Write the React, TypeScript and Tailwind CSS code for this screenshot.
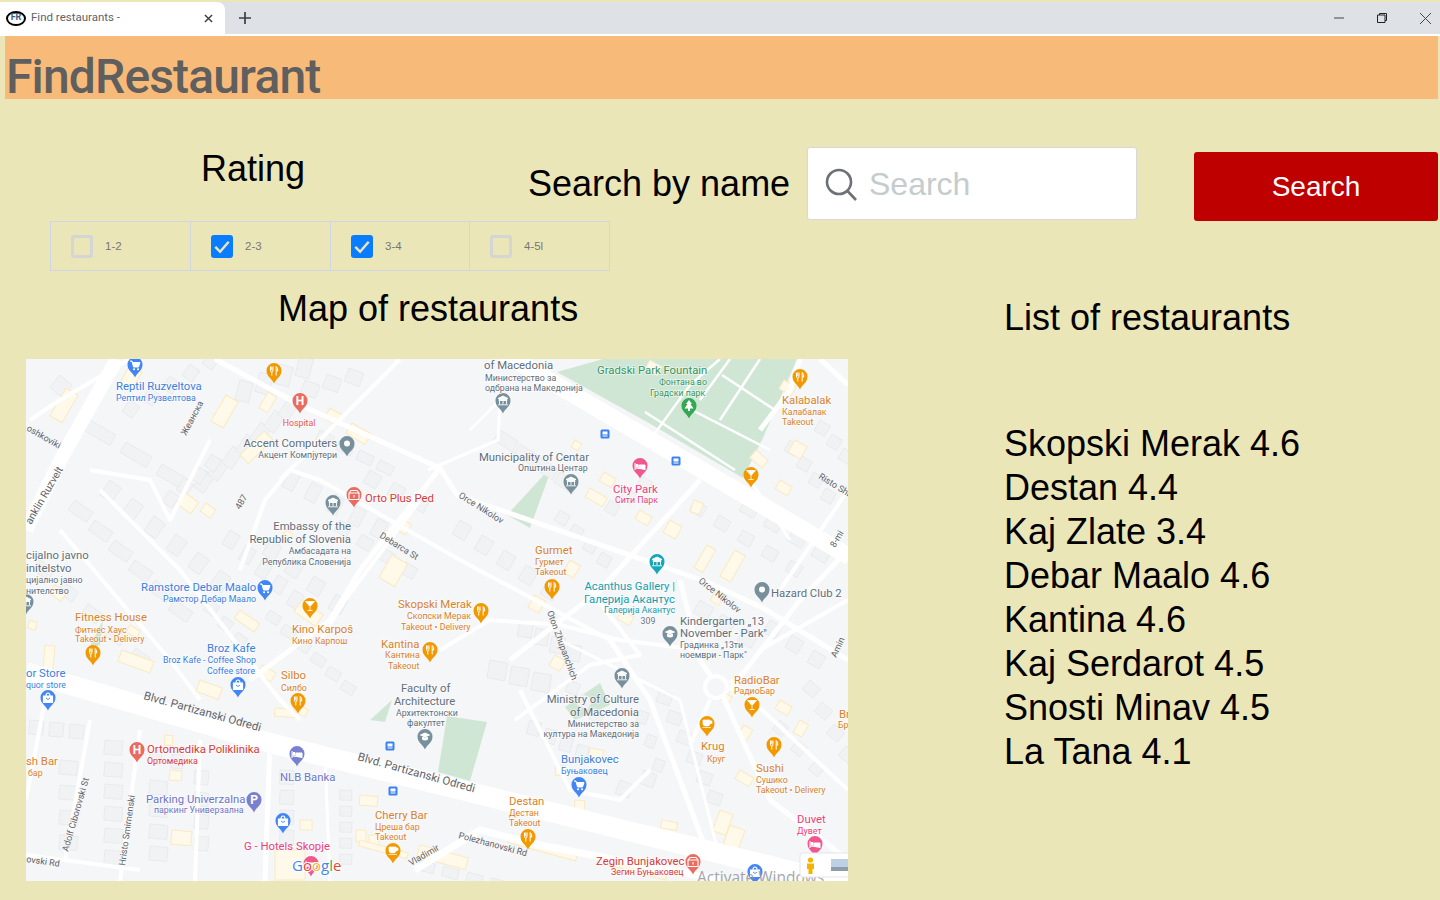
const roads: [string, number][] = [
  ["M26 672 L270 743 L848 885", 20],
  ["M490 345 L557 385 L850 557", 17],
  ["M26 530 L63 455 L117 359", 14],
  ["M215 359 L300 405 L440 468 L457 495 L707 582 L763 608 L848 660", 5],
  ["M440 468 L360 570 L330 620 L250 680", 5],
  ["M130 359 L60 400 L30 420", 4],
  ["M210 440 L170 520 L150 480 L90 470", 4],
  ["M100 490 L180 570 L280 700 L300 720", 4],
  ["M60 530 L170 660 L200 700", 4],
  ["M240 570 L265 500 L290 470 L320 480 L460 560 L610 640", 4],
  ["M280 480 L400 359", 4],
  ["M320 640 L345 600 L420 500", 4],
  ["M428 470 L498 440 L500 400 L470 430", 3],
  ["M510 660 L600 590 L700 480", 5],
  ["M440 650 L490 620 L560 625 L620 640 L700 650", 4],
  ["M610 640 L650 700 L710 860", 5],
  ["M590 590 L640 655 L590 665 L515 720", 4],
  ["M520 690 L570 790 L620 800 L650 770", 4],
  ["M680 580 L700 660 L720 690 L770 800 L848 860", 5],
  ["M730 690 L800 600 L848 550", 5],
  ["M730 680 L848 790", 4],
  ["M710 700 L690 745", 4],
  ["M760 650 L848 600", 4],
  ["M790 540 L750 480", 3],
  ["M780 590 L848 490", 4],
  ["M760 430 L790 390 L800 359", 5],
  ["M820 359 L848 385", 5],
  ["M45 700 L26 800", 4],
  ["M90 720 L65 860", 4],
  ["M140 730 L120 881", 4],
  ["M200 740 L195 881", 4],
  ["M270 740 L265 881", 5],
  ["M325 755 L330 881", 3],
  ["M26 855 L140 870", 4],
  ["M415 870 L480 830 L540 845 L720 880", 7],
  ["M720 860 L680 700 L560 640", 3],
];

const greens = [
  "557,372 603,359 797,359 763,438 743,478 647,422",
  "507,515 553,465 530,528",
  "447,716 487,722 470,781 438,772",
  "565,707 600,683 610,705 575,720",
  "370,720 392,700 385,722",
  "88,650 103,620 100,645",
];

const parkPaths = [
  "M650 440 L690 385 L720 359",
  "M692 410 L770 450",
  "M730 359 L700 400",
  "M722 375 L775 410",
  "M760 359 L720 420",
  "M645 412 L735 470",
];

// x, y, dx, dy, n, w, h, angle
const grayRows: number[][] = [
  [60, 375, 38, -2, 1, 16, 16, 40],
  [90, 420, 36, 22, 3, 30, 12, 30],
  [110, 480, 22, 18, 6, 14, 18, 35],
  [75, 500, 20, 20, 6, 22, 12, 35],
  [40, 560, 24, 22, 5, 18, 12, 35],
  [130, 400, 20, -12, 5, 12, 14, 35],
  [205, 470, 14, -12, 7, 12, 20, 35],
  [170, 490, 14, -12, 4, 12, 14, 35],
  [240, 380, 20, -8, 4, 14, 20, 15],
  [305, 380, 22, -6, 3, 16, 14, 20],
  [320, 430, 20, 10, 4, 16, 10, 25],
  [290, 470, 22, 12, 5, 12, 18, 28],
  [230, 530, 16, 15, 5, 12, 16, 30],
  [270, 540, 22, 18, 4, 14, 16, 30],
  [340, 520, 22, 14, 4, 14, 12, 30],
  [370, 470, 24, 12, 3, 14, 14, 30],
  [460, 520, 22, 15, 5, 14, 16, 30],
  [500, 430, 20, 14, 4, 22, 12, 32],
  [560, 510, 14, 14, 4, 12, 12, 30],
  [610, 500, 16, -12, 3, 12, 12, 30],
  [695, 500, 24, 15, 5, 14, 12, 30],
  [745, 500, 24, 15, 4, 16, 12, 30],
  [790, 440, 12, 16, 4, 12, 12, 30],
  [820, 420, 12, 14, 6, 12, 12, 30],
  [700, 600, 22, 14, 3, 16, 14, 30],
  [770, 620, 22, 15, 3, 14, 14, 30],
  [810, 680, 12, 22, 4, 14, 12, 40],
  [780, 720, 18, 20, 3, 12, 12, 40],
  [660, 690, 10, 20, 6, 14, 12, 20],
  [640, 710, 8, 24, 3, 10, 12, 20],
  [520, 620, 16, 8, 4, 14, 16, 10],
  [490, 660, 22, 6, 3, 18, 18, 10],
  [530, 720, 16, 8, 4, 12, 14, 15],
  [570, 680, 12, 14, 3, 12, 12, 25],
  [620, 780, 24, -10, 2, 14, 14, 20],
  [270, 610, 15, 14, 6, 14, 10, 32],
  [210, 600, 14, 16, 3, 12, 12, 35],
  [30, 720, 20, 2, 3, 14, 14, 5],
  [105, 740, 0, 22, 6, 18, 14, 5],
  [60, 760, 0, 25, 4, 18, 14, 5],
  [150, 750, 22, 4, 2, 12, 14, 5],
  [150, 780, 0, 22, 4, 18, 14, 5],
  [195, 770, 0, 22, 4, 14, 14, 5],
  [280, 770, 0, 20, 5, 14, 14, 2],
  [340, 790, 0, 16, 5, 12, 10, 2],
  [420, 860, 24, 6, 4, 16, 10, 15],
];

const yellows: number[][] = [
  [66, 388, 14, 32, 30], [226, 395, 14, 30, 30], [268, 392, 10, 18, 30], [330, 408, 14, 12, 30], [352, 423, 22, 12, 30],
  [184, 492, 18, 14, 35], [206, 503, 12, 10, 35], [240, 455, 34, 12, -45], [286, 530, 8, 10, 30], [397, 530, 12, 10, -60],
  [392, 555, 18, 26, 30], [302, 600, 26, 14, 35], [240, 610, 24, 10, 35], [122, 650, 34, 12, 20], [130, 625, 12, 8, 30],
  [55, 585, 14, 10, 35], [200, 680, 24, 12, 20], [262, 665, 16, 10, 30], [275, 708, 20, 8, 5], [300, 705, 10, 8, 30],
  [165, 735, 8, 10, 5], [170, 770, 12, 10, 5], [172, 830, 20, 14, 5], [300, 820, 12, 10, 0], [275, 850, 30, 30, 0],
  [360, 795, 18, 10, 5], [369, 835, 10, 10, 0], [356, 830, 10, 12, 0], [590, 488, 20, 10, 30], [640, 510, 14, 10, 30],
  [670, 520, 14, 14, 30], [694, 500, 10, 12, 20], [707, 545, 10, 26, 30], [735, 550, 12, 30, 30], [716, 590, 10, 12, 30],
  [756, 450, 16, 10, 40], [780, 480, 14, 10, 30], [720, 478, 12, 8, 40], [784, 380, 14, 10, 30], [795, 440, 14, 14, 30],
  [720, 690, 14, 8, 30], [780, 700, 14, 10, 30], [744, 725, 10, 12, 30], [740, 770, 16, 10, 30], [800, 720, 10, 14, 30],
  [590, 748, 14, 10, 10], [556, 765, 10, 10, 5], [575, 800, 10, 10, 5], [662, 820, 16, 8, 10], [720, 810, 14, 22, 20],
  [730, 825, 16, 20, 20], [420, 845, 50, 12, 15], [610, 855, 60, 10, 15], [360, 840, 50, 6, 15], [510, 835, 70, 8, 15],
  [575, 440, 8, 8, 30], [604, 472, 14, 10, 30], [650, 360, 14, 10, 30], [570, 560, 12, 14, 30], [622, 610, 14, 10, 30],
  [535, 595, 12, 14, 30], [555, 655, 12, 12, 30], [130, 365, 14, 20, 30], [45, 645, 10, 30, 5], [30, 620, 8, 8, 20],
];

const labels: [string, number, number, string, number, "start" | "end" | "middle"][] = [
  ["Reptil Ruzveltova", 116, 390, "#3c7fe0", 11.3, "start"], ["Рептил Рузвелтова", 116, 401, "#3c7fe0", 8.8, "start"],
  ["Hospital", 299, 426, "#e8554e", 8.8, "middle"],
  ["Accent Computers", 337, 447, "#5f6f7b", 11.3, "end"], ["Акцент Компјутери", 337, 458, "#5f6f7b", 8.8, "end"],
  ["Orto Plus Ped", 365, 502, "#d93a35", 11.3, "start"],
  ["Embassy of the", 351, 530, "#5f6f7b", 11.3, "end"], ["Republic of Slovenia", 351, 543, "#5f6f7b", 11.3, "end"],
  ["Амбасадата на", 351, 554, "#5f6f7b", 8.8, "end"], ["Република Словенија", 351, 565, "#5f6f7b", 8.8, "end"],
  ["Ramstore Debar Maalo", 141, 591, "#3c7fe0", 11.3, "start"], ["Рамстор Дебар Маало", 163, 602, "#3c7fe0", 8.8, "start"],
  ["cijalno javno", 26, 559, "#5f6f7b", 11.3, "start"], ["initelstvo", 26, 572, "#5f6f7b", 11.3, "start"],
  ["цијално јавно", 26, 583, "#5f6f7b", 8.8, "start"], ["нителство", 26, 594, "#5f6f7b", 8.8, "start"],
  ["Fitness House", 75, 621, "#d9822b", 11.3, "start"], ["Фитнес Хаус", 75, 633, "#d9822b", 8.8, "start"], ["Takeout • Delivery", 75, 642, "#d9822b", 8.8, "start"],
  ["Kino Karpoš", 292, 633, "#d9822b", 11.3, "start"], ["Кино Карпош", 292, 644, "#d9822b", 8.8, "start"],
  ["Broz Kafe", 207, 652, "#3c7fe0", 11.3, "start"], ["Broz Kafe - Coffee Shop", 163, 663, "#3c7fe0", 8.8, "start"], ["Coffee store", 207, 674, "#3c7fe0", 8.8, "start"],
  ["Skopski Merak", 398, 608, "#d9822b", 11.3, "start"], ["Скопски Мерак", 407, 619, "#d9822b", 8.8, "start"], ["Takeout • Delivery", 401, 630, "#d9822b", 8.8, "start"],
  ["Kantina", 381, 648, "#d9822b", 11.3, "start"], ["Кантина", 385, 658, "#d9822b", 8.8, "start"], ["Takeout", 388, 669, "#d9822b", 8.8, "start"],
  ["Silbo", 281, 679, "#d9822b", 11.3, "start"], ["Силбо", 281, 691, "#d9822b", 8.8, "start"],
  ["Faculty of", 401, 692, "#5f6f7b", 11.3, "start"], ["Architecture", 394, 705, "#5f6f7b", 11.3, "start"], ["Архитектонски", 396, 716, "#5f6f7b", 8.8, "start"], ["факултет", 407, 726, "#5f6f7b", 8.8, "start"],
  ["or Store", 26, 677, "#3c7fe0", 11.3, "start"], ["quor store", 26, 688, "#3c7fe0", 8.8, "start"],
  ["sh Bar", 26, 765, "#d9822b", 11.3, "start"], ["бар", 28, 776, "#d9822b", 8.8, "start"],
  ["Ortomedika Poliklinika", 147, 753, "#d93a35", 11.3, "start"], ["Ортомедика", 147, 764, "#d93a35", 8.8, "start"],
  ["NLB Banka", 280, 781, "#6e76c9", 11.3, "start"],
  ["Parking Univerzalna", 146, 803, "#6e76c9", 11.3, "start"], ["паркинг Универзална", 154, 813, "#6e76c9", 8.8, "start"],
  ["G - Hotels Skopje", 244, 850, "#ec407a", 11.3, "start"],
  ["Cherry Bar", 375, 819, "#d9822b", 11.3, "start"], ["Цреша бар", 375, 830, "#d9822b", 8.8, "start"], ["Takeout", 375, 840, "#d9822b", 8.8, "start"],
  ["Destan", 509, 805, "#d9822b", 11.3, "start"], ["Дестан", 509, 816, "#d9822b", 8.8, "start"], ["Takeout", 509, 826, "#d9822b", 8.8, "start"],
  ["Bunjakovec", 561, 763, "#3c7fe0", 11.3, "start"], ["Буњаковец", 561, 774, "#3c7fe0", 8.8, "start"],
  ["Ministry of Culture", 639, 703, "#5f6f7b", 11.3, "end"], ["of Macedonia", 639, 716, "#5f6f7b", 11.3, "end"],
  ["Министерство за", 639, 727, "#5f6f7b", 8.8, "end"], ["култура на Македонија", 639, 737, "#5f6f7b", 8.8, "end"],
  ["Krug", 701, 750, "#d9822b", 11.3, "start"], ["Круг", 707, 762, "#d9822b", 8.8, "start"],
  ["Sushi", 756, 772, "#d9822b", 11.3, "start"], ["Сушико", 756, 783, "#d9822b", 8.8, "start"], ["Takeout • Delivery", 756, 793, "#d9822b", 8.8, "start"],
  ["RadioBar", 734, 684, "#d9822b", 11.3, "start"], ["РадиоБар", 734, 694, "#d9822b", 8.8, "start"],
  ["Kindergarten „13", 680, 625, "#5f6f7b", 11.3, "start"], ["November - Park\"", 680, 637, "#5f6f7b", 11.3, "start"],
  ["Градинка „13ти", 680, 648, "#5f6f7b", 8.8, "start"], ["ноември - Парк\"", 680, 658, "#5f6f7b", 8.8, "start"],
  ["Zegin Bunjakovec", 596, 865, "#d93a35", 11.3, "start"], ["Зегин Буњаковец", 611, 875, "#d93a35", 8.8, "start"],
  ["Duvet", 797, 823, "#ec407a", 11.3, "start"], ["Дувет", 797, 834, "#ec407a", 8.8, "start"],
  ["Hazard Club 2", 771, 597, "#5f6f7b", 11.3, "start"],
  ["Acanthus Gallery |", 675, 590, "#129eaf", 11.3, "end"], ["Галерија Акантус", 675, 603, "#129eaf", 11.3, "end"], ["Галерија Акантус", 675, 613, "#129eaf", 8.8, "end"],
  ["309", 648, 624, "#70757a", 8.8, "middle"],
  ["Gurmet", 535, 554, "#d9822b", 11.3, "start"], ["Гурмет", 535, 565, "#d9822b", 8.8, "start"], ["Takeout", 535, 575, "#d9822b", 8.8, "start"],
  ["City Park", 613, 493, "#ec407a", 11.3, "start"], ["Сити Парк", 615, 503, "#ec407a", 8.8, "start"],
  ["Municipality of Centar", 479, 461, "#5f6f7b", 11.3, "start"], ["Општина Центар", 518, 471, "#5f6f7b", 8.8, "start"],
  ["of Macedonia", 484, 369, "#5f6f7b", 11.3, "start"], ["Министерство за", 485, 381, "#5f6f7b", 8.8, "start"], ["одбрана на Македонија", 485, 391, "#5f6f7b", 8.8, "start"],
  ["Gradski Park Fountain", 597, 374, "#34955a", 11.3, "start"], ["Фонтана во", 659, 385, "#34955a", 8.8, "start"], ["Градски парк", 650, 396, "#34955a", 8.8, "start"],
  ["Kalabalak", 782, 404, "#d9822b", 11.3, "start"], ["Калабалак", 782, 415, "#d9822b", 8.8, "start"], ["Takeout", 782, 425, "#d9822b", 8.8, "start"],
  ["Br", 839, 718, "#d9822b", 11.3, "start"], ["Бр", 838, 728, "#d9822b", 8.8, "start"],
];

const streets: [string, number, number, number, number][] = [
  ["Blvd. Partizanski Odredi", 143, 699, 15.5, 11.5],
  ["Blvd. Partizanski Odredi", 357, 760, 15.5, 11.5],
  ["Orce Nikolov", 458, 497, 32, 9],
  ["Orce Nikolov", 698, 582, 38, 9],
  ["Debarca St", 379, 537, 32, 9],
  ["Жеанска", 186, 436, -62, 9],
  ["487", 240, 510, -60, 9],
  ["oshkoviki", 26, 430, 30, 9],
  ["anklin Ruzvelt", 31, 525, -60, 10.5],
  ["Risto Shi", 818, 478, 32, 9],
  ["Oton Zhupanchich", 547, 612, 70, 9],
  ["Adolf Ciborovski St", 68, 852, -74, 9],
  ["Hristo Smirnenski", 125, 866, -82, 9],
  ["ovski Rd", 26, 862, 8, 9],
  ["Vladimir", 411, 866, -30, 9],
  ["Polezhanovski Rd", 458, 838, 15, 9],
  ["8-mi", 835, 548, -60, 9],
  ["Amin", 836, 658, -65, 9],
];

const ORANGE = "#f29900";
const pins: [number, number, string, string][] = [
  [274, 372, ORANGE, "food"], [93, 654, ORANGE, "food"], [481, 612, ORANGE, "food"], [430, 651, ORANGE, "food"],
  [298, 702, ORANGE, "food"], [552, 588, ORANGE, "food"], [800, 378, ORANGE, "food"], [774, 746, ORANGE, "food"], [528, 838, ORANGE, "food"],
  [310, 607, ORANGE, "bar"], [751, 476, ORANGE, "bar"], [752, 706, ORANGE, "bar"],
  [707, 725, ORANGE, "cup"], [393, 852, ORANGE, "cup"],
  [135, 366, "#4285f4", "cart"], [265, 589, "#4285f4", "cart"], [579, 786, "#4285f4", "cart"],
  [238, 686, "#4285f4", "bag"], [48, 699, "#4285f4", "bag"], [283, 822, "#4285f4", "bag"], [755, 873, "#4285f4", "bag"],
  [300, 402, "#ea6b5f", "H"], [137, 751, "#ea6b5f", "H"],
  [354, 496, "#ea6b5f", "store"], [693, 863, "#ea6b5f", "store"],
  [347, 445, "#78909c", "dot"], [762, 591, "#78909c", "dot"],
  [503, 402, "#78909c", "gov"], [571, 483, "#78909c", "gov"], [333, 504, "#78909c", "gov"], [622, 677, "#78909c", "gov"], [26, 603, "#78909c", "gov"],
  [425, 738, "#78909c", "cap"], [670, 635, "#78909c", "cap"],
  [689, 407, "#34a853", "tree"], [640, 467, "#f0578d", "bed"], [815, 845, "#f0578d", "bed"], [311, 865, "#f0578d", "bed"],
  [657, 563, "#12a8b8", "gov"], [297, 755, "#7a80d0", "bed"], [254, 801, "#7a80d0", "P"],
];

function Pin({ x, y, color, kind }: { x: number; y: number; color: string; kind: string }) {
  return (
    <g transform={`translate(${x} ${y})`}>
      <path d="M0 11.5C-1.5 7-7.5 5-7.5-1.5A7.5 7.5 0 1 1 7.5-1.5C7.5 5 1.5 7 0 11.5Z" fill={color} />
      {kind === "food" && <path d="M-3.5-5.5V-2Q-3.5 0-2.2 0V3.5M-2.2-5.5V-2M-1-5.5V-2Q-1 0-2.2 0M2.2 3.5V-5.5Q3.8-4.5 3.8-1H2.2" fill="none" stroke="#fff" strokeWidth="1" />}
      {kind === "bar" && <path d="M-4.5-5.5H4.5L0-.5ZM0-.5V3.5M-2.5 3.5H2.5" fill="#fff" stroke="#fff" strokeWidth=".8" />}
      {kind === "cup" && <path d="M-4-5H3V-1Q3 1-.5 1T-4-1ZM3-4H5V-1.5H3M-4.5 2.5H4" fill="#fff" stroke="#fff" strokeWidth=".7" />}
      {kind === "cart" && <path d="M-5-5H-3L-1.5 1H3.5L5-3.5H-2.5" fill="#fff" stroke="#fff" strokeWidth="1" />}
      {kind === "cart" && <path d="M-1 3.2h.1M3 3.2h.1" stroke="#fff" strokeWidth="2" strokeLinecap="round" />}
      {kind === "bag" && <path d="M-4.5-3H4.5V3.5H-4.5ZM-2-3Q-2-6 0-6T2-3" fill="none" stroke="#fff" strokeWidth="1.2" />}
      {kind === "bag" && <rect x="-4" y="-3" width="8" height="6.5" fill="#fff" />}
      {kind === "bag" && <path d="M-2-1Q0 2 2-1" fill="none" stroke={color} strokeWidth=".9" />}
      {(kind === "H" || kind === "P") && <text y="2.5" textAnchor="middle" fontSize="12" fontWeight="700" fill="#fff">{kind}</text>}
      {kind === "store" && <path d="M-5-3H5V3.5H-5ZM-5-3L-3-5.5H3L5-3M0-1V1.5" fill="none" stroke="#fff" strokeWidth="1.1" />}
      {kind === "dot" && <circle cy="-1.5" r="3" fill="#fff" />}
      {kind === "gov" && <path d="M-5-3.5L0-6L5-3.5ZM-4-2.5H4V-1.5H-4ZM-3.5-1V2M0-1V2M3.5-1V2M-5 2.8H5" fill="#fff" stroke="#fff" strokeWidth=".9" />}
      {kind === "cap" && <path d="M-5.5-3L0-5.5L5.5-3L0-.5ZM-3-1V1.5Q0 3.5 3 1.5V-1" fill="#fff" />}
      {kind === "tree" && <path d="M0-7L-3-3H-1.5L-4.5 1.5H-1V4H1V1.5H4.5L1.5-3H3Z" fill="#fff" />}
      {kind === "bed" && <path d="M-5-4V3M-5 1H5V3M5 1V-2H-1V1M-4-2.5H-2V0H-4Z" fill="#fff" stroke="#fff" strokeWidth="1" />}
    </g>
  );
}

function MapView() {
  return (
    <svg viewBox="26 359 822 522" className="block w-[822px] h-[522px] bg-[#f5f6f8] [font-family:Roboto,sans-serif]">
      {greens.map((p) => <polygon key={p} points={p} fill="#cfe6d5" />)}
      {parkPaths.map((d) => <path key={d} d={d} stroke="#fff" strokeWidth="2.5" fill="none" />)}
      {grayRows.flatMap(([x, y, dx, dy, n, w, h, a]) =>
        Array.from({ length: n }, (_, i) => (
          <rect key={`${x}-${y}-${i}`} x={x + dx * i} y={y + dy * i} width={w} height={h}
            transform={`rotate(${a} ${x + dx * i} ${y + dy * i})`} fill="#f1f2f4" stroke="#e6e8eb" strokeWidth=".8" />
        ))
      )}
      {yellows.map(([x, y, w, h, a]) => (
        <rect key={`${x}-${y}`} x={x} y={y} width={w} height={h} transform={`rotate(${a} ${x} ${y})`} fill="#fff9e9" stroke="#fbe9c2" strokeWidth="1" />
      ))}
      {roads.map(([d, w]) => <path key={d} d={d} stroke="#fff" strokeWidth={w} fill="none" strokeLinejoin="round" />)}
      <circle cx="716" cy="687" r="11" fill="#f5f6f8" stroke="#fff" strokeWidth="4" />
      {streets.map(([t, x, y, a, s]) => (
        <text key={`${t}-${x}`} x={x} y={y} fontSize={s} fill="#5f6368" transform={`rotate(${a} ${x} ${y})`}>{t}</text>
      ))}
      {[[605, 434], [676, 461], [390, 746], [393, 791]].map(([x, y]) => (
        <g key={x}>
          <rect x={x - 4.5} y={y - 4.5} width="9" height="9" rx="1.5" fill="#3b82f0" />
          <rect x={x - 2.5} y={y - 2.5} width="5" height="3" fill="#fff" />
          <rect x={x - 2.5} y={y + 1.5} width="5" height="1" fill="#fff" />
        </g>
      ))}
      {pins.map(([x, y, c, k]) => <Pin key={`${x}-${y}`} x={x} y={y} color={c} kind={k} />)}
      {labels.map(([t, x, y, c, s, anchor]) => (
        <text key={`${t}-${x}-${y}`} x={x} y={y} fontSize={s} fill={c} textAnchor={anchor} stroke="#fff" strokeWidth="1.5" paintOrder="stroke" strokeOpacity=".6">{t}</text>
      ))}
      <text x="292" y="871" fontSize="15" fontWeight="500" stroke="#fff" strokeWidth="2" paintOrder="stroke" className="[font-family:'Open_Sans',sans-serif]">
        <tspan fill="#4285f4">G</tspan><tspan fill="#ea4335">o</tspan><tspan fill="#fbbc04">o</tspan><tspan fill="#4285f4">g</tspan><tspan fill="#34a853">l</tspan><tspan fill="#ea4335">e</tspan>
      </text>
      <text x="697" y="883" fontSize="15.5" fill="#8f9194" opacity=".8" className="[font-family:'Open_Sans',sans-serif]">Activate Windows</text>
      <rect x="800" y="853" width="50" height="24" rx="3" fill="#fff" stroke="#e4e5e7" strokeWidth="1" />
      <circle cx="810.5" cy="860" r="2.6" fill="#f5b400" />
      <path d="M807 863.5H814V869H812.5V874H808.5V869H807Z" fill="#f5b400" />
      <rect x="831" y="859" width="17" height="12" fill="#bcd2e4" />
      <rect x="831" y="867" width="17" height="4" fill="#8f9dab" />
    </svg>
  );
}

function Rating({ label, checked }: { label: string; checked?: boolean }) {
  return (
    <div className="flex items-center pl-[20px] border-l first:border-l-0 border-[#cfd5e2]">
      {checked ? (
        <span className="w-[22px] h-[23px] rounded-[3px] bg-[#0a7cff] flex items-center justify-center">
          <svg viewBox="0 0 23 23" className="w-[22px] h-[23px]">
            <path d="M4.5 12L9.5 17L18.5 6.5" fill="none" stroke="#ebe6b7" strokeWidth="2.6" />
          </svg>
        </span>
      ) : (
        <span className="w-[22px] h-[23px] rounded-[3px] border-[3px] border-[#d4d6d4]" />
      )}
      <span className="ml-[12px] mt-[1px] text-[11.5px] text-[#777]">{label}</span>
    </div>
  );
}

export default function App() {
  const items = ["Skopski Merak 4.6", "Destan 4.4", "Kaj Zlate 3.4", "Debar Maalo 4.6", "Kantina 4.6", "Kaj Serdarot 4.5", "Snosti Minav 4.5", "La Tana 4.1"];
  return (
    <div className="h-[900px] overflow-hidden bg-[#ebe6b7] text-black [font-family:'Liberation_Sans',Arial,sans-serif]">
      {/* browser chrome */}
      <div className="mt-0 pt-[2px]">
        <div className="h-[34px] bg-[#dee1e6] border-b-2 border-white flex items-center">
          <div className="w-[225px] h-[34px] -mb-[2px] bg-white rounded-tr-[8px] flex items-center pl-[6px] pr-[12px] pb-[2px]">
            <span className="w-[20px] h-[15px] rounded-[50%] border-2 border-black flex items-center justify-center text-[9px] font-bold text-[#3b5a85] [font-family:Roboto,sans-serif]">FR</span>
            <span className="ml-[5px] text-[11.5px] text-[#5f6368] [font-family:Roboto,sans-serif]">Find restaurants -</span>
            <svg viewBox="0 0 10 10" className="ml-auto w-[9px] h-[9px]"><path d="M1 1L9 9M9 1L1 9" stroke="#3c4043" strokeWidth="1.6" /></svg>
          </div>
          <svg viewBox="0 0 12 12" className="ml-[14px] w-[12px] h-[12px]"><path d="M6 0V12M0 6H12" stroke="#3c4043" strokeWidth="1.7" /></svg>
          <div className="ml-auto flex items-center pr-[9px]">
            <svg viewBox="0 0 10 10" className="w-[10px] h-[10px] mr-[33px]"><path d="M0 5H10" stroke="#444" strokeWidth="1" /></svg>
            <svg viewBox="0 0 10 10" className="w-[10px] h-[10px] mr-[33px]"><path d="M.5 2H8V9.5H.5ZM2.5 2V.5H9.5V7.5H8" fill="none" stroke="#222" strokeWidth="1" /></svg>
            <svg viewBox="0 0 10 10" className="w-[11px] h-[11px]"><path d="M0 0L10 10M10 0L0 10" stroke="#444" strokeWidth=".9" /></svg>
          </div>
        </div>
      </div>

      <div className="ml-[5px] mr-[2px] h-[63px] bg-[#f8ba78] pl-[1px] pt-[12px] overflow-hidden">
        <h1 className="text-[48px] leading-[58px] font-medium tracking-[-0.85px] text-[#5f5f5f] [font-family:Roboto,sans-serif]">FindRestaurant</h1>
      </div>

      {/* filters */}
      <div className="flex h-[122px]">
        <div className="w-[528px] pl-[201px] pt-[50px] text-[36px] leading-[40px]">Rating</div>
        <div className="pt-[64px] w-[262px] text-[36px] leading-[41px] whitespace-nowrap">Search by name</div>
        <div className="ml-[17px] mt-[48px] w-[330px] h-[73px] bg-white rounded-[3px] border border-[#d8d8d8] flex items-center pl-[16px]">
          <svg viewBox="0 0 34 34" className="w-[34px] h-[34px]">
            <circle cx="15" cy="15" r="12" fill="none" stroke="#6d7175" strokeWidth="2.6" />
            <path d="M23.5 24L32 33" stroke="#6d7175" strokeWidth="2.6" />
          </svg>
          <span className="ml-[11px] text-[32px] text-[#c4cccd]">Search</span>
        </div>
        <button className="ml-[57px] mt-[53px] w-[244px] h-[69px] bg-[#bf0000] rounded-[3px] text-white text-[28px]">Search</button>
      </div>

      <div className="ml-[50px] w-[560px] h-[50px] grid grid-cols-[139px_140px_139px_1fr] border border-[#cfd5e2]">
        <Rating label="1-2" />
        <Rating label="2-3" checked />
        <Rating label="3-4" checked />
        <Rating label="4-5l" />
      </div>

      <div className="flex">
        <div className="ml-[26px] w-[822px]">
          <h2 className="pl-[252px] pt-[17px] h-[88px] text-[36px] leading-[41px]">Map of restaurants</h2>
          <MapView />
        </div>
        <div className="ml-[156px] pt-[26px] text-[36px]">
          <h2 className="leading-[41px]">List of restaurants</h2>
          <ul className="mt-[84px]">
            {items.map((t) => <li key={t} className="leading-[44px] whitespace-nowrap">{t}</li>)}
          </ul>
        </div>
      </div>
    </div>
  );
}
